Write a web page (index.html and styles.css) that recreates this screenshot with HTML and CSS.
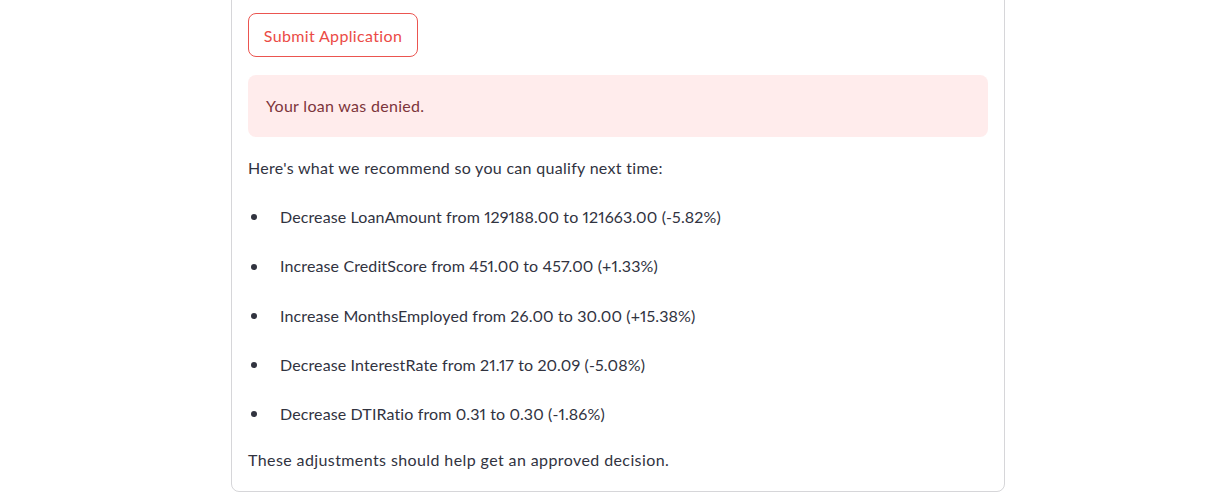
FILE: index.html
```html
<!DOCTYPE html>
<html lang="en">
<head>
<meta charset="utf-8">
<title>Loan Application</title>
<link rel="stylesheet" href="styles.css">
</head>
<body>
<main class="card">
  <button class="btn" type="button">Submit Application</button>
  <div class="alert">Your loan was denied.</div>
  <p class="text intro">Here's what we recommend so you can qualify next time:</p>
  <ul class="recs">
    <li><span class="dot"></span>Decrease LoanAmount from 129188.00 to 121663.00 (-5.82%)</li>
    <li><span class="dot"></span>Increase CreditScore from 451.00 to 457.00 (+1.33%)</li>
    <li><span class="dot"></span>Increase MonthsEmployed from 26.00 to 30.00 (+15.38%)</li>
    <li><span class="dot"></span>Decrease InterestRate from 21.17 to 20.09 (-5.08%)</li>
    <li><span class="dot"></span>Decrease DTIRatio from 0.31 to 0.30 (-1.86%)</li>
  </ul>
  <p class="text outro">These adjustments should help get an approved decision.</p>
</main>
</body>
</html>
```

FILE: styles.css
```css
* { box-sizing: border-box; }
html, body { margin: 0; padding: 0; background: #ffffff; }
body {
  font-family: "Source Sans Pro", Lato, "Noto Sans", sans-serif;
  font-size: 16px;
  letter-spacing: 0.3px;
  font-variant-numeric: proportional-nums;
  color: rgb(49, 51, 63);
  overflow: hidden;
}
.card {
  width: 774px;
  margin: -20px 0 0 231px;
  padding: 32px 16px 18px;
  border: 1px solid rgba(49, 51, 63, 0.2);
  border-radius: 8px;
  display: flex;
  flex-direction: column;
  align-items: flex-start;
}
.btn {
  width: 170px;
  height: 44px;
  padding: 0 12px;
  font: inherit;
  font-size: 16px;
  letter-spacing: 0.35px;
  color: rgb(235, 75, 70);
  background: #fff;
  border: 1px solid rgb(235, 85, 80);
  border-radius: 8px;
  display: flex;
  align-items: center;
  justify-content: center;
}
.alert {
  align-self: stretch;
  margin-top: 18px;
  padding: 18px 18px;
  line-height: 26px;
  background: rgba(255, 43, 43, 0.09);
  color: rgb(125, 53, 59);
  border-radius: 8px;
}
.text { margin: 0; line-height: 25.6px; }
.intro { margin-top: 18px; }
.outro { margin-top: 20.4px; letter-spacing: 0.4px; }
.recs {
  list-style: none;
  margin: 23.6px 0 0;
  padding: 0;
  display: flex;
  flex-direction: column;
  gap: 23.6px;
}
.recs li {
  display: flex;
  align-items: center;
  line-height: 25.6px;
  letter-spacing: 0.12px;
}
.dot {
  width: 6px;
  height: 6px;
  border-radius: 50%;
  background: rgb(49, 51, 63);
  margin: 1px 23px 0 3px;
  flex: none;
}
```
